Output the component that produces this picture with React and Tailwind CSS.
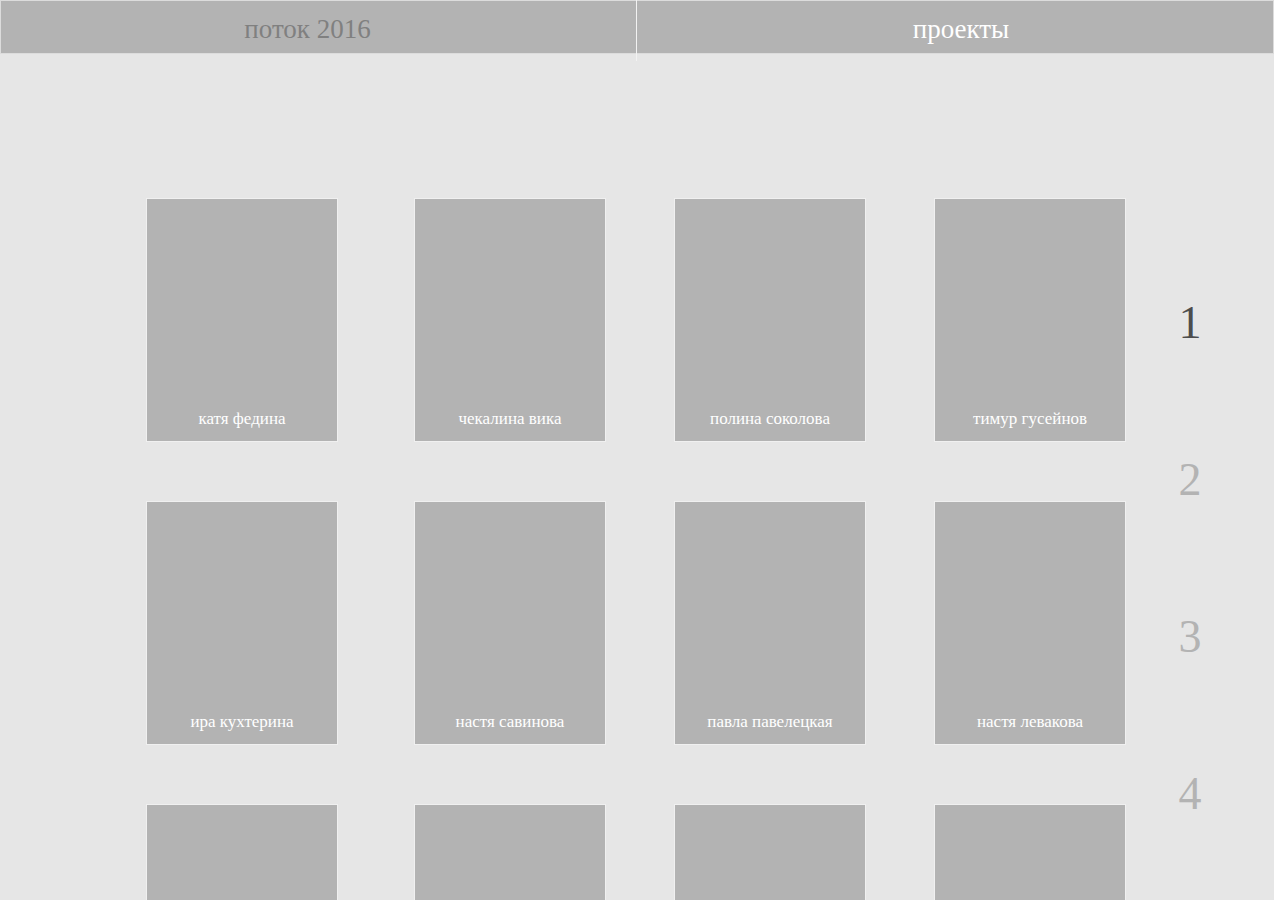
import React from 'react';

const rows = [
    ['катя федина', 'чекалина вика', 'полина соколова', 'тимур гусейнов'],
    ['ира кухтерина', 'настя савинова', 'павла павелецкая', 'настя левакова'],
    ['', '', '', ''],
];

const gaps = ['', 'ml-[76px]', 'ml-[68px]', 'ml-[68px]'];

const Card = ({ name, className }) => (
    <div className={`w-[192px] h-[244px] bg-[#b3b3b3] border border-[#f0f0f0] flex flex-col justify-end items-center pb-[12px] ${className}`}>
        <span className="text-white text-[17px] leading-[20px]">{name}</span>
    </div>
);

const App = () => {
    return (
        <div className="min-h-screen bg-[#e6e6e6] overflow-hidden" style={{ fontFamily: '"Liberation Serif", "DejaVu Serif", serif' }}>
            {/* Header */}
            <div className="flex items-start h-[61px]">
                <div className="w-[636px] h-[54px] bg-[#b3b3b3] border-l border-t border-b border-[#dcdcdc] flex items-center justify-center pr-[22px]">
                    <span className="text-[27px] text-[#808080] leading-none pt-[4px]">поток 2016</span>
                </div>
                <div className="w-px h-[61px] bg-[#f2f2f2]" />
                <div className="flex-1 h-[54px] bg-[#b3b3b3] border-t border-b border-r border-[#dcdcdc] flex items-center justify-center pl-[12px]">
                    <span className="text-[27px] text-white leading-none pt-[4px]">проекты</span>
                </div>
            </div>

            {/* Content */}
            <div className="flex items-start pt-[137px] pl-[146px]">
                <div className="flex flex-col gap-[59px]">
                    {rows.map((row, i) => (
                        <div key={i} className="flex">
                            {row.map((name, j) => (
                                <Card key={j} name={name} className={gaps[j]} />
                            ))}
                        </div>
                    ))}
                </div>

                {/* Page numbers */}
                <div className="ml-[34px] mt-[46px] w-[60px] flex flex-col">
                    {[1, 2, 3, 4].map((n) => (
                        <div key={n} className="h-[157px] flex items-center justify-center">
                            <span className={`text-[46px] leading-none ${n === 1 ? 'text-[#4d4d4d]' : 'text-[#b3b3b3]'}`}>{n}</span>
                        </div>
                    ))}
                </div>
            </div>
        </div>
    );
};

export default App;
